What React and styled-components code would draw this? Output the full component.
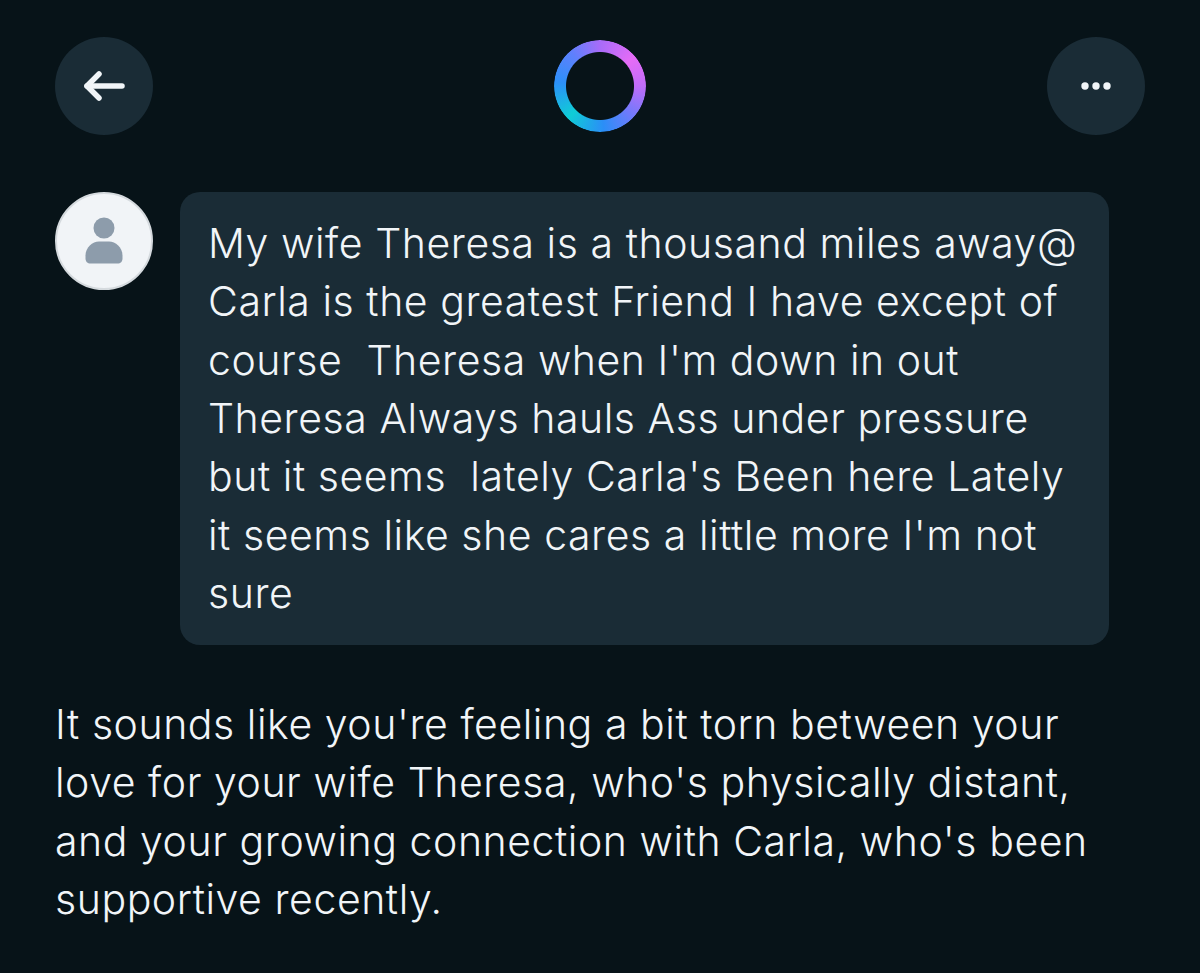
import React from "react";
import styled, { createGlobalStyle } from "styled-components";

const Global = createGlobalStyle`
  html, body { margin: 0; padding: 0; background: #071318; }
  body { width: 1200px; height: 973px; overflow: hidden; }
`;
const Page = styled.div`
  box-sizing: border-box;
  width: 1200px;
  height: 973px;
  padding: 37px 55px 0;
  background: #071318;
  color: #f1f5f8;
  font-family: Inter, "Noto Sans", sans-serif;
  font-size: 41px;
  font-weight: 350;
  line-height: 58.35px;
  letter-spacing: 0.55px;
`;
const Header = styled.header`
  display: flex;
  align-items: center;
  justify-content: space-between;
  height: 98px;
`;
const RoundButton = styled.button`
  width: 98px;
  height: 98px;
  padding: 0;
  border: 0;
  border-radius: 50%;
  background: #1a2c36;
  display: flex;
  align-items: center;
  justify-content: center;
`;
const Ring = styled.div`
  width: 92px;
  height: 92px;
  border-radius: 50%;
  background: conic-gradient(
    #a86cf9 0deg,
    #e56cf6 50deg,
    #c06cf8 90deg,
    #6c7bfb 135deg,
    #2b8ef7 175deg,
    #0fcdd6 225deg,
    #2c90f9 275deg,
    #5f80fc 320deg,
    #a86cf9 360deg
  );
  -webkit-mask: radial-gradient(circle, transparent 33.5px, #000 34.5px);
  mask: radial-gradient(circle, transparent 33.5px, #000 34.5px);
`;
const Message = styled.section`
  display: flex;
  align-items: flex-start;
  gap: 27px;
  margin-top: 57px;
`;
const Avatar = styled.div`
  box-sizing: border-box;
  flex: none;
  width: 98px;
  height: 98px;
  border-radius: 50%;
  background: #f1f4f7;
  border: 2px solid #d5dade;
  display: flex;
  align-items: center;
  justify-content: center;
`;
const Bubble = styled.div`
  box-sizing: border-box;
  width: 929px;
  padding: 22px 28px;
  height: 453px;
  border-radius: 20px;
  background: #1a2c36;
`;
const Line = styled.div`
  white-space: pre;
`;
const Reply = styled.div`
  margin-top: 50px;
`;

const bubbleLines = [
  "My wife Theresa is a thousand miles away@",
  "Carla is the greatest Friend I have except of",
  "course  Theresa when I'm down in out",
  "Theresa Always hauls Ass under pressure",
  "but it seems  lately Carla's Been here Lately",
  "it seems like she cares a little more I'm not",
  "sure",
];
const replyLines = [
  "It sounds like you're feeling a bit torn between your",
  "love for your wife Theresa, who's physically distant,",
  "and your growing connection with Carla, who's been",
  "supportive recently.",
];

export default function App() {
  return (
    <Page>
      <Global />
      <Header>
        <RoundButton aria-label="Back">
          <svg width="44" height="32" viewBox="0 0 44 32" fill="none" stroke="#f1f5f8" strokeWidth="5.5" strokeLinecap="round" strokeLinejoin="round">
            <path d="M40 16H5" />
            <path d="M17 4 5 16l12 12" />
          </svg>
        </RoundButton>
        <Ring />
        <RoundButton aria-label="More">
          <svg width="32" height="10" viewBox="0 0 32 10" fill="#f1f5f8">
            <circle cx="5" cy="5" r="3.7" />
            <circle cx="16" cy="5" r="3.7" />
            <circle cx="27" cy="5" r="3.7" />
          </svg>
        </RoundButton>
      </Header>
      <Message>
        <Avatar>
          <svg width="38" height="48" viewBox="0 0 38 48" fill="#8d9cab">
            <circle cx="19" cy="11" r="10.5" />
            <path d="M.5 38.500c0-8 7-14 13.500-14h10c6.500 0 13.500 6 13.500 14v3c0 3-2 5-5 5H5.500c-3 0-5-2-5-5z" />
          </svg>
        </Avatar>
        <Bubble>
          {bubbleLines.map((l) => (
            <Line key={l}>{l}</Line>
          ))}
        </Bubble>
      </Message>
      <Reply>
        {replyLines.map((l) => (
          <Line key={l}>{l}</Line>
        ))}
      </Reply>
    </Page>
  );
}
